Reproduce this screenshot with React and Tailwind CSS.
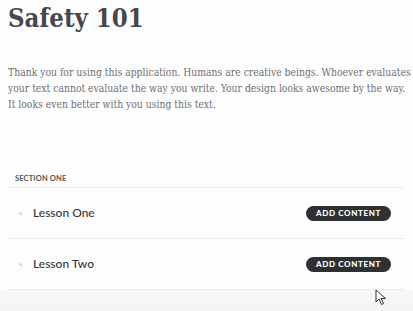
export default function App() {
  const serif = { fontFamily: '"DejaVu Serif", "Liberation Serif", serif', fontStretch: 'condensed' };
  const sans = { fontFamily: 'Lato, "Open Sans", sans-serif' };
  const Row = ({ title }) => (
    <div className="flex items-center h-[51px] border-b border-[#ececec] pl-[11px] pr-[14px]">
      <span className="w-[3px] h-[3px] rounded-full bg-[#d6d6d6]"></span>
      <span className="ml-[11px] text-[12px] text-[#383838] font-medium" style={sans}>{title}</span>
      <button className="ml-auto h-[15px] w-[85px] rounded-full bg-[#2f3034] text-white text-[8px] font-black tracking-[0.08em] leading-none" style={sans}>
        ADD CONTENT
      </button>
    </div>
  );
  return (
    <div className="w-[413px] h-[311px] overflow-hidden bg-[#fdfdfe] relative">
      <div className="px-2">
        <h1 className="text-[25.5px] leading-[34px] font-bold text-[#47464d] pt-[1px]" style={serif}>Safety 101</h1>
        <p className="mt-[29px] text-[10.3px] leading-[16px] text-[#707070] whitespace-nowrap" style={serif}>
          Thank you for using this application. Humans are creative beings. Whoever evaluates<br />
          your text cannot evaluate the way you write. Your design looks awesome by the way.<br />
          It looks even better with you using this text.
        </p>
        <div className="mt-[61px] border-b border-[#ececec] pl-[7px] pb-[3px] text-[7.5px] font-bold text-[#555] tracking-[0.02em]" style={sans}>
          SECTION ONE
        </div>
        <Row title="Lesson One" />
        <Row title="Lesson Two" />
      </div>
      <div className="bg-gradient-to-b from-[#f7f7f8] to-[#f3f3f4] h-[30px] pl-[19px] pt-[20px] flex items-start gap-[11px]">
        <span className="w-[3px] h-[3px] rounded-full bg-[#ddd] mt-[6px]"></span>
        <span className="text-[12px] text-[#aaa]" style={sans}>Add lesson title</span>
      </div>
      <svg className="absolute left-[375px] top-[289px]" width="12" height="17" viewBox="0 0 12 17">
        <path d="M1 1 L1 13 L4 10 L6.5 15.5 L8.5 14.5 L6 9.5 L10.5 9.5 Z" fill="#fff" stroke="#333" strokeWidth="1" strokeLinejoin="round" />
      </svg>
    </div>
  );
}
